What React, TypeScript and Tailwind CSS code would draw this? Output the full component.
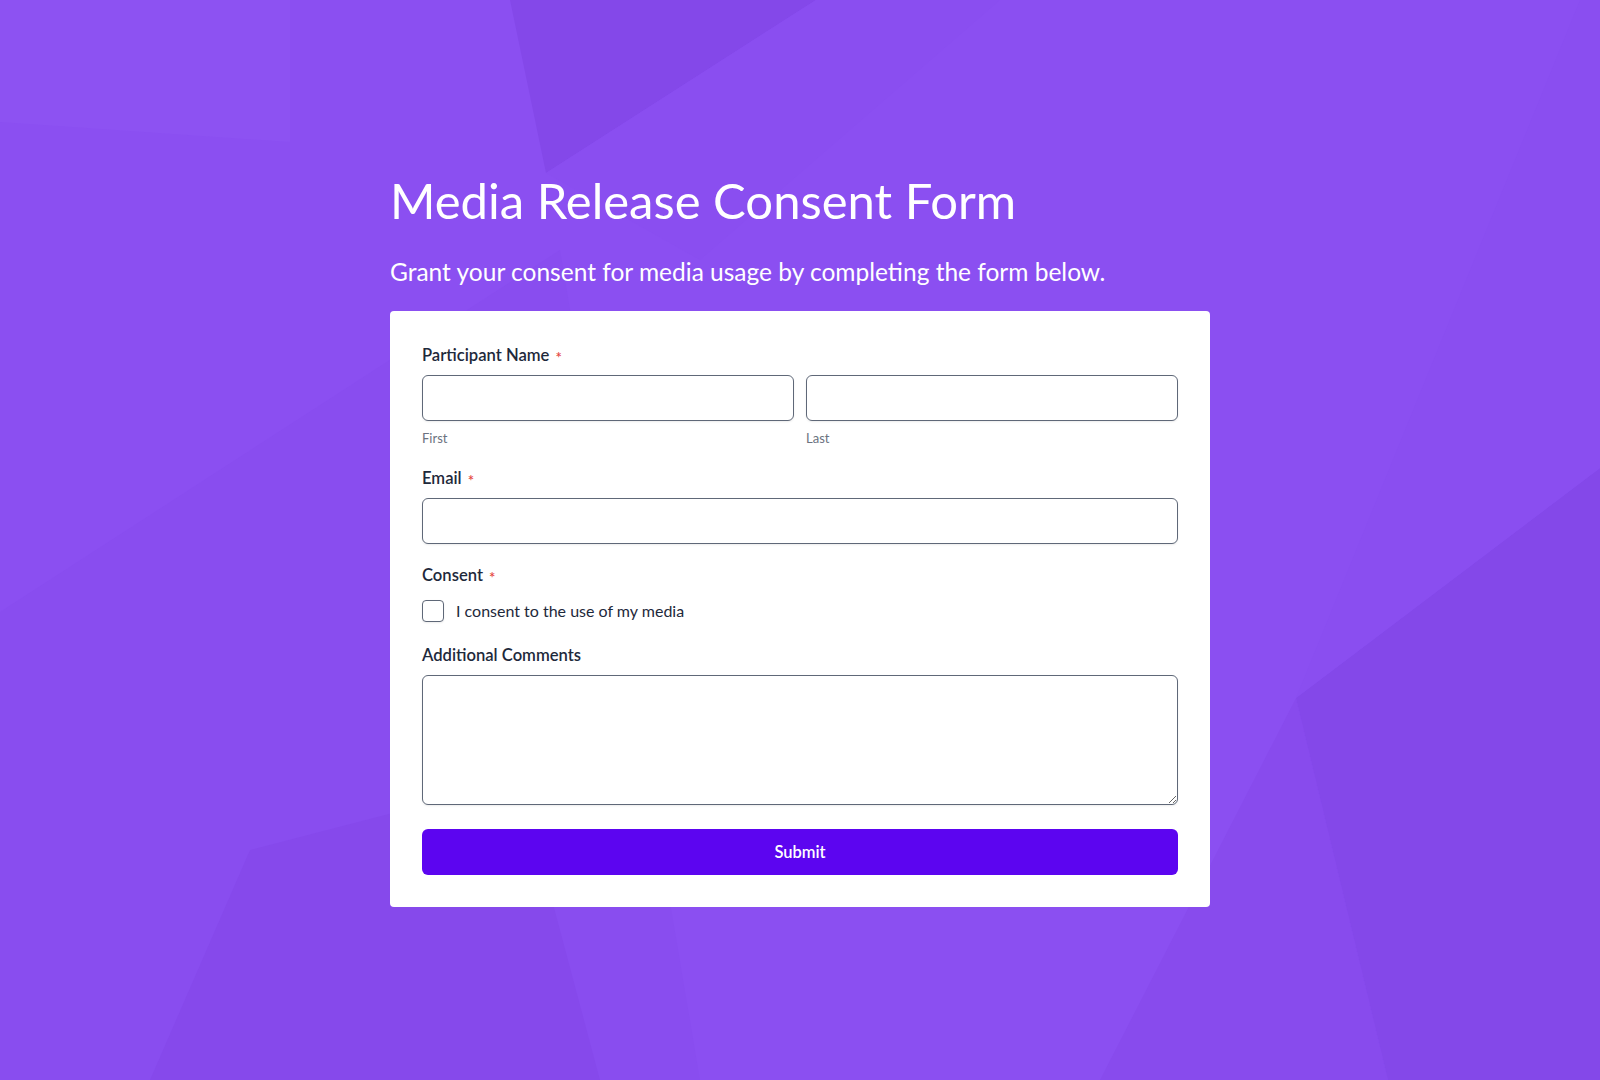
import React from "react";

const font = { fontFamily: "Lato, 'Noto Sans', sans-serif" };

const Backdrop = () => (
  <svg
    className="absolute inset-0 h-full w-full"
    viewBox="0 0 1600 1080"
    preserveAspectRatio="none"
    aria-hidden
  >
    <rect width="1600" height="1080" fill="#8b4ff1" />
    <polygon points="0,0 290,0 290,142 0,122" fill="#8d52f2" />
    <polygon points="510,0 816,0 546,173" fill="#8448e9" />
    <polygon points="546,173 816,0 1000,0 700,260" fill="#8a4ef0" />
    <polygon points="0,612 560,250 700,1080 0,1080" fill="#894def" />
    <polygon points="150,1080 250,850 520,780 600,1080" fill="#8649eb" />
    <polygon points="1100,1080 1296,698 1388,1080" fill="#884bed" />
    <polygon points="1296,698 1600,468 1600,1080 1388,1080" fill="#8448e9" />
    <polygon points="1296,698 1580,0 1600,0 1600,468" fill="#8a4ef0" />
  </svg>
);

const Label = ({ text, required }: { text: string; required?: boolean }) => (
  <div className="flex items-center text-[16.6px] leading-6 font-semibold text-[#1e293b]">
    {text}
    {required && (
      <span className="ml-1.5 translate-y-[2px] text-[15px] leading-none text-[#e5483f]">*</span>
    )}
  </div>
);

const inputCls =
  "block w-full h-[46px] rounded-md border border-[#5f6878] bg-white shadow-[0_1px_2px_rgba(0,0,0,0.08)] outline-none";

export default function App() {
  return (
    <div className="relative min-h-[1080px] w-full overflow-hidden" style={font}>
      <Backdrop />
      <main className="relative mx-auto flex w-[820px] flex-col pt-[171px]">
        <h1 className="text-[49px] leading-[1.2] font-normal text-white">
          Media Release Consent Form
        </h1>
        <p className="mt-[27px] text-[24.5px] leading-[1.2] text-white">
          Grant your consent for media usage by completing the form below.
        </p>

        <form className="mt-[25px] flex flex-col rounded bg-white p-8">
          <div>
            <Label text="Participant Name" required />
            <div className="mt-2 grid grid-cols-2 gap-3">
              <div>
                <input className={inputCls} />
                <div className="mt-[7px] text-[13px] leading-5 text-[#6b7280]">First</div>
              </div>
              <div>
                <input className={inputCls} />
                <div className="mt-[7px] text-[13px] leading-5 text-[#6b7280]">Last</div>
              </div>
            </div>
          </div>

          <div className="mt-[18px]">
            <Label text="Email" required />
            <input type="email" className={`mt-2 ${inputCls}`} />
          </div>

          <div className="mt-[19px]">
            <Label text="Consent" required />
            <label className="mt-[12px] flex items-center gap-3 text-[16px] leading-6 text-[#1e293b]">
              <span className="h-[22px] w-[22px] rounded border border-[#5f6878] bg-white shadow-[0_1px_2px_rgba(0,0,0,0.08)]" />
              I consent to the use of my media
            </label>
          </div>

          <div className="mt-[20px]">
            <Label text="Additional Comments" />
            <textarea className="mt-2 block h-[130px] w-full rounded-md border border-[#5f6878] bg-white shadow-[0_1px_2px_rgba(0,0,0,0.08)] outline-none" />
          </div>

          <button
            type="button"
            className="mt-[24px] h-[46px] w-full rounded-md bg-[#5c05f0] text-[16.5px] font-semibold text-white"
          >
            Submit
          </button>
        </form>
      </main>
    </div>
  );
}
